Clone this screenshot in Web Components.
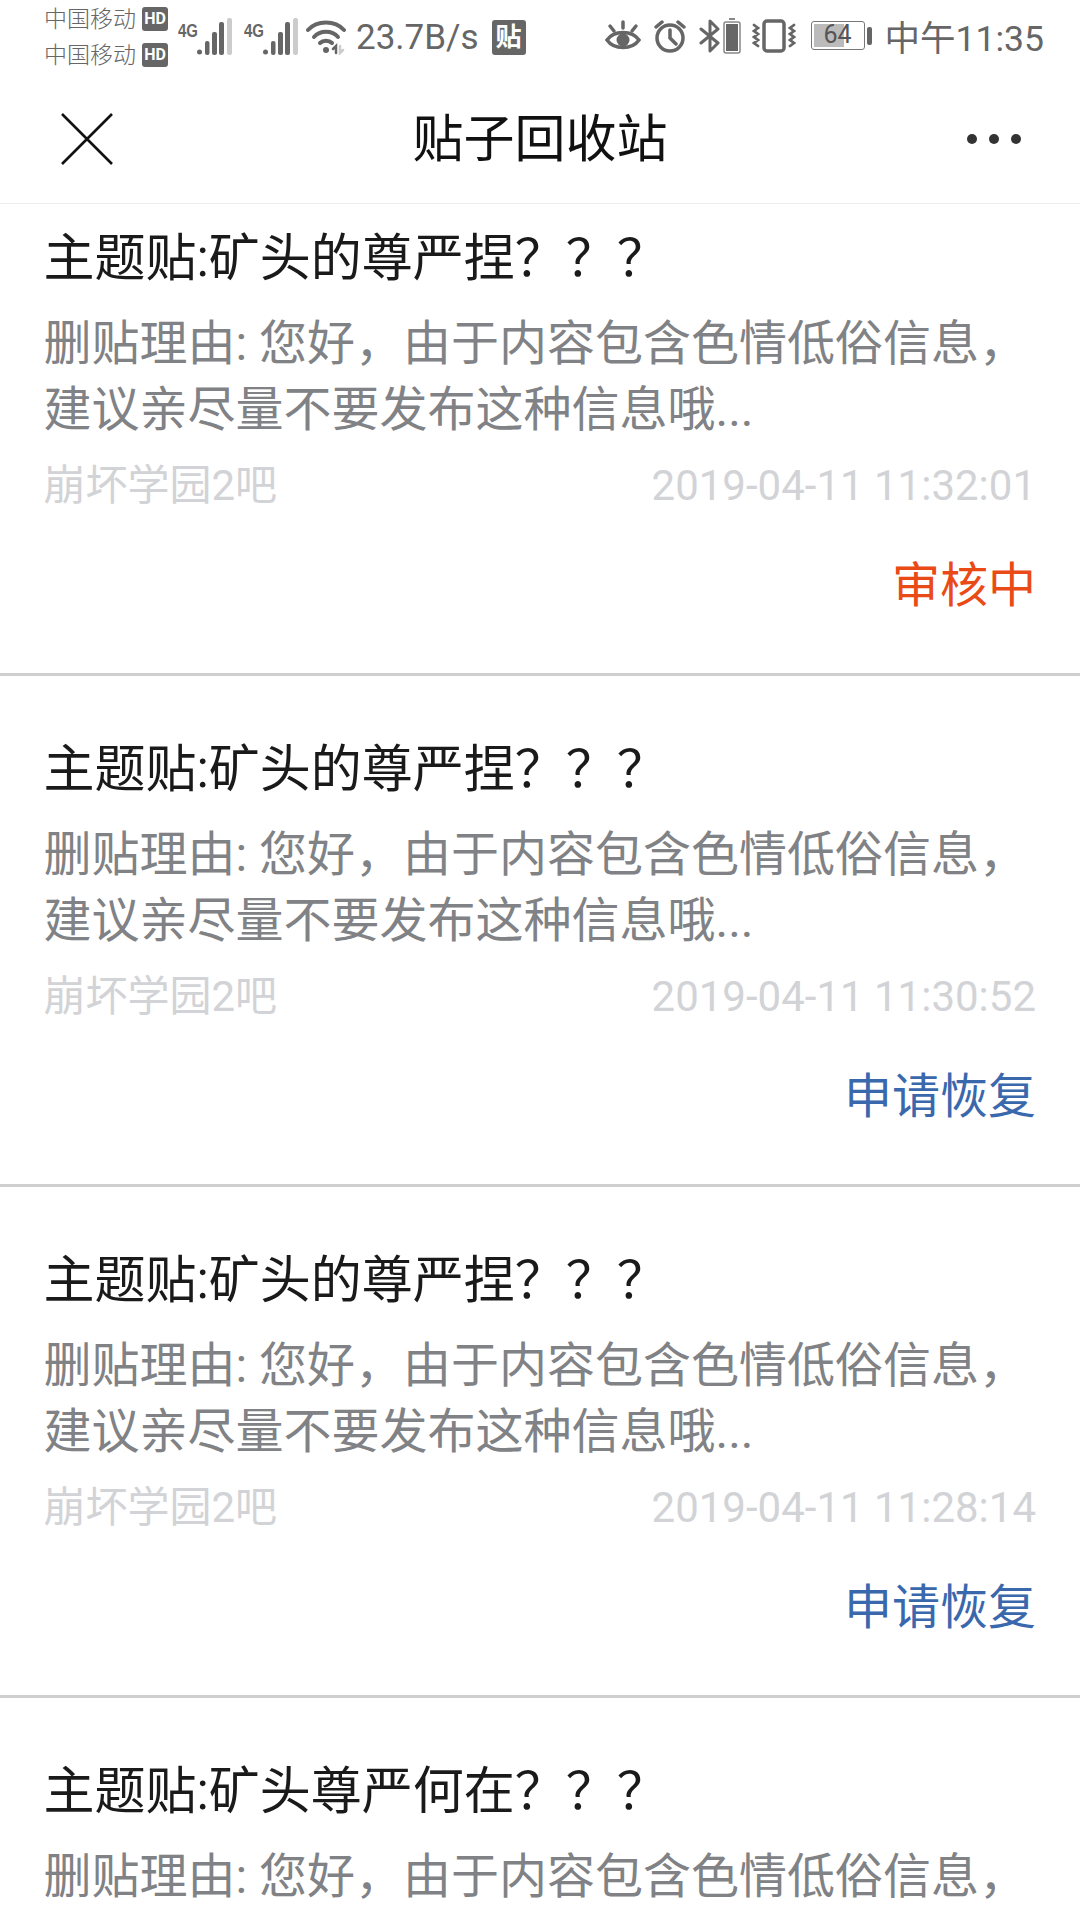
<!DOCTYPE html>
<html lang="zh-CN"><head><meta charset="utf-8">
<style>
html,body{margin:0;padding:0;background:#fff}
body{width:1080px;height:1920px;overflow:hidden;font-family:Roboto,"Noto Sans CJK SC",sans-serif}
</style></head><body>
<app-page></app-page>
<template id="status-tpl">
<style>
:host{display:flex;height:74px;align-items:center;box-sizing:border-box;padding:0 36px 0 44px;color:#666;font-family:Roboto,"Noto Sans CJK SC",sans-serif}
.sim{display:flex;flex-direction:column;gap:7px;font-size:23px;line-height:29px;width:134px;font-weight:300}
.sim div{display:flex;align-items:center;gap:6px;height:29px}
.hd{background:#666;color:#fff;font-size:16px;font-weight:700;border-radius:3px;width:26px;height:24px;line-height:24px;text-align:center}
.sp{flex:1}
.t{font-size:35px;white-space:nowrap}
svg{display:block;flex:none}
.tie{background:#666;color:#fff;font-size:26px;font-weight:700;width:34px;height:35px;line-height:35px;text-align:center;border-radius:3px;margin-left:13px}
.right{display:flex;align-items:center;margin-bottom:3px}
</style>
<div class="sim"><div>中国移动<span class="hd">HD</span></div><div>中国移动<span class="hd">HD</span></div></div>
<svg width="56" height="42" viewBox="0 0 56 42"><text x="0" y="21" font-family="Liberation Sans" font-size="19" font-weight="700" fill="#666" textLength="20" lengthAdjust="spacingAndGlyphs">4G</text>
<circle cx="21.5" cy="36" r="2.5" fill="#666"/><rect x="27" y="25" width="4.5" height="14" rx="2" fill="#666"/><rect x="34" y="16" width="5" height="23" rx="2" fill="#666"/><rect x="41" y="6" width="5" height="33" rx="2" fill="#666"/><rect x="49" y="2" width="5" height="37" rx="2" fill="#ccc"/></svg>
<svg width="56" height="42" viewBox="0 0 56 42" style="margin-left:10px"><text x="0" y="21" font-family="Liberation Sans" font-size="19" font-weight="700" fill="#666" textLength="20" lengthAdjust="spacingAndGlyphs">4G</text>
<circle cx="21.5" cy="36" r="2.5" fill="#666"/><rect x="27" y="25" width="4.5" height="14" rx="2" fill="#666"/><rect x="34" y="16" width="5" height="23" rx="2" fill="#666"/><rect x="41" y="6" width="5" height="33" rx="2" fill="#666"/><rect x="49" y="2" width="5" height="37" rx="2" fill="#ccc"/></svg>
<svg width="40" height="36" viewBox="0 0 40 36" style="margin-left:6px" fill="none" stroke="#666" stroke-width="4" stroke-linecap="round"><path d="M2 11C11 1 29 1 38 11"/><path d="M8 18C14 11 26 11 32 18"/><path d="M14 24C17 21 23 21 26 24"/><circle cx="20" cy="31" r="3" fill="#666" stroke="none"/><path d="M30 34V27l-3 3" stroke-width="2.5"/><path d="M34 27v7l3-3" stroke="#ccc" stroke-width="2.5"/></svg>
<span class="t" style="margin-left:10px">23.7B/s</span><span class="tie">贴</span>
<span class="sp"></span>
<div class="right">
<svg width="38" height="32" viewBox="0 0 36 32" fill="none" stroke="#666" stroke-width="3.5" stroke-linecap="round"><path d="M2 20C9 10 27 10 34 20C27 30 9 30 2 20Z"/><circle cx="18" cy="20" r="6.5" fill="#666" stroke="none"/><path d="M18 2v6M5 6l4 5M31 6l-4 5"/></svg>
<svg width="32" height="34" viewBox="0 0 32 34" style="margin-left:12px" fill="none" stroke="#666" stroke-width="3.5" stroke-linecap="round"><circle cx="16" cy="19" r="13"/><path d="M16 11v8l6 6M2 8l6-5M30 8l-6-5"/></svg>
<svg width="22" height="34" viewBox="0 0 22 34" style="margin-left:13px" fill="none" stroke="#666" stroke-width="3" stroke-linecap="round" stroke-linejoin="round"><path d="M2 10L19 24L11 32V2L19 10L2 24"/></svg>
<svg width="18" height="36" viewBox="0 0 18 36" style="margin-left:2px"><rect x="1" y="4" width="16" height="31" rx="2" fill="none" stroke="#888" stroke-width="1.5"/><rect x="3" y="6" width="12" height="27" fill="#666"/><rect x="6" y="0" width="6" height="2" fill="#888"/></svg>
<svg width="44" height="34" viewBox="0 0 44 34" style="margin-left:11px" fill="none" stroke="#666" stroke-linecap="round"><rect x="12" y="2" width="20" height="30" rx="3" stroke-width="3.5"/><path d="M2 6l4 3-4 3 4 3-4 3 4 3-4 3 4 3M42 6l-4 3 4 3-4 3 4 3-4 3 4 3-4 3" stroke-width="2.8"/></svg>
<div style="margin-left:15px;position:relative;width:54px;height:29px;border:1.5px solid #777;border-radius:3px;box-sizing:border-box;padding:2px"><div style="width:64%;height:100%;background:#bbb"></div><span style="position:absolute;left:0;right:0;top:-2px;text-align:center;font-size:25px;line-height:29px;color:#555">64</span></div>
<svg width="6" height="18" style="margin-left:2px"><rect width="5" height="18" rx="2" fill="#666"/></svg>
<span class="t" style="margin-left:12px;font-size:35.5px">中午11:35</span>
</div>
</template>
<template id="nav-tpl">
<style>
:host{display:flex;align-items:center;justify-content:space-between;height:130px;box-sizing:border-box;border-bottom:1px solid #eee;padding:0 58px 0 61px;position:relative}
.t{position:absolute;left:0;right:0;text-align:center;font-size:51px;line-height:60px;color:#111;top:36px}
svg{display:block}
</style>
<svg width="52" height="52" viewBox="0 0 52 52" fill="none" stroke="#111" stroke-width="2.6"><path d="M1 1L51 51M51 1L1 51"/></svg>
<span class="t"><slot></slot></span>
<svg width="56" height="12" viewBox="0 0 56 12" fill="#333"><circle cx="6" cy="6" r="5"/><circle cx="28" cy="6" r="5"/><circle cx="50" cy="6" r="5"/></svg>
</template>
<template id="post-tpl">
<style>
:host{display:block;box-sizing:border-box;height:511px;padding:0 44px 0 43.5px;border-bottom:3px solid #cfcfcf;overflow:hidden}
.title{font-size:51px;line-height:64px;color:#1a1a1a;padding-top:62px;white-space:nowrap}
.reason{line-height:66px;color:#808285;margin-top:20px;width:990px;overflow:hidden;font-size:48px}
.meta{display:flex;justify-content:space-between;font-size:42px;line-height:52px;color:#d2d3d6;margin-top:17px}
.action{text-align:right;font-size:48px;line-height:64px;margin-top:42px;color:#3a68ad}
</style>
<div class="title"><slot name="title"></slot></div>
<div class="reason"><slot name="reason"></slot></div>
<div class="meta"><slot name="forum"></slot><slot name="date"></slot></div>
<div class="action"><slot name="action"></slot></div>
</template>
<template id="page-tpl">
<style>:host{display:block;height:1920px;overflow:hidden}
.first{margin-top:-39px}
.list{height:1716px;overflow:hidden}
.r{display:block}
</style>
<status-bar></status-bar>
<nav-bar>贴子回收站</nav-bar>
<div class="list"><div class="first">
<post-item><span slot="title">主题贴:矿头的尊严捏？？？</span><span slot="reason">删贴理由: 您好，由于内容包含色情低俗信息，<br>建议亲尽量不要发布这种信息哦...</span><span slot="forum">崩坏学园2吧</span><span slot="date">2019-04-11 11:32:01</span><span slot="action" style="color:#ea4a16">审核中</span></post-item>
<post-item><span slot="title">主题贴:矿头的尊严捏？？？</span><span slot="reason">删贴理由: 您好，由于内容包含色情低俗信息，<br>建议亲尽量不要发布这种信息哦...</span><span slot="forum">崩坏学园2吧</span><span slot="date">2019-04-11 11:30:52</span><span slot="action">申请恢复</span></post-item>
<post-item><span slot="title">主题贴:矿头的尊严捏？？？</span><span slot="reason">删贴理由: 您好，由于内容包含色情低俗信息，<br>建议亲尽量不要发布这种信息哦...</span><span slot="forum">崩坏学园2吧</span><span slot="date">2019-04-11 11:28:14</span><span slot="action">申请恢复</span></post-item>
<post-item><span slot="title">主题贴:矿头尊严何在？？？</span><span slot="reason">删贴理由: 您好，由于内容包含色情低俗信息，</span></post-item>
</div></div>
</template>
<script>
for(const [n,t] of [['status-bar','status-tpl'],['nav-bar','nav-tpl'],['post-item','post-tpl'],['app-page','page-tpl']]){
 customElements.define(n,class extends HTMLElement{constructor(){super();this.attachShadow({mode:'open'}).appendChild(document.getElementById(t).content.cloneNode(true))}});
}
</script>
</body></html>
